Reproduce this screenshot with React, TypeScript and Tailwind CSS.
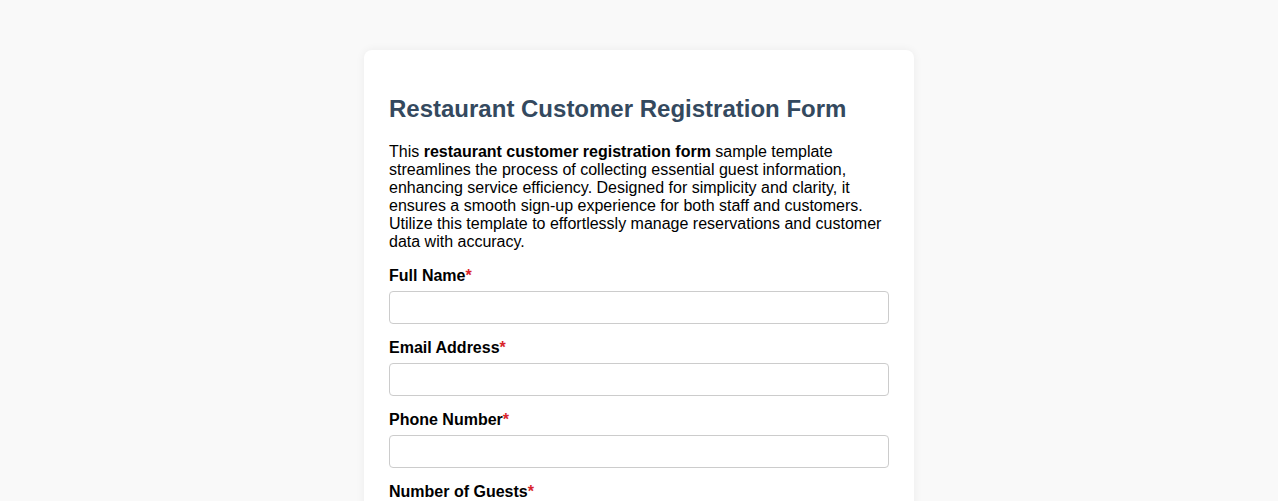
import React from "react";

const fields = [
  { label: "Full Name", type: "text" },
  { label: "Email Address", type: "email" },
  { label: "Phone Number", type: "tel" },
  { label: "Number of Guests", type: "number" },
  { label: "Reservation Date", type: "date" },
];

export default function App() {
  return (
    <div
      className="min-h-screen bg-[#f9f9f9] pt-[50px] pb-10"
      style={{ fontFamily: '"Liberation Sans", Arial, sans-serif' }}
    >
      <div className="mx-auto w-[550px] rounded-lg bg-white p-[25px] shadow-[0_0_10px_rgba(0,0,0,0.06)]">
        <h1 className="mt-5 mb-[21px] text-[24px] leading-[27px] font-bold text-[#34495e]">
          Restaurant Customer Registration Form
        </h1>
        <p className="mb-4 text-[16px] leading-[18px] text-black">
          This <strong>restaurant customer registration form</strong> sample
          template streamlines the process of collecting essential guest
          information, enhancing service efficiency. Designed for simplicity
          and clarity, it ensures a smooth sign-up experience for both staff
          and customers. Utilize this template to effortlessly manage
          reservations and customer data with accuracy.
        </p>

        <form>
          {fields.map((f) => (
            <div key={f.label} className="mb-[15px]">
              <label className="mb-[6px] block text-[16px] leading-[18px] font-bold text-black">
                {f.label}
                <span className="text-[#d9252b]">*</span>
              </label>
              <input
                type={f.type}
                className="block h-[33px] w-full rounded-[4px] border border-[#cccccc] px-2 text-[14px] outline-none"
              />
            </div>
          ))}
        </form>
      </div>
    </div>
  );
}
